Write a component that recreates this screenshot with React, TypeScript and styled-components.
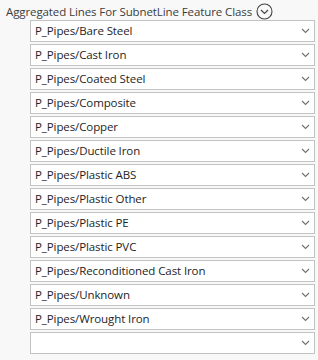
import styled, { createGlobalStyle } from "styled-components";

const Global = createGlobalStyle`
    html, body {
        margin: 0;
        padding: 0;
        background: #f8f8f8;
    }
`;

const Panel = styled.div`
    width: 318px;
    height: 360px;
    background: #f8f8f8;
    font-family: "Open Sans", "Noto Sans", sans-serif;
    font-size: 11.5px;
    color: #2b2b2b;
    box-sizing: border-box;
    padding: 2px 0 0 0;
`;

const Header = styled.div`
    display: flex;
    align-items: center;
    gap: 4px;
    height: 18px;
    padding-left: 6px;
`;

const Title = styled.span`
    color: #3c3c3c;
    white-space: nowrap;
    letter-spacing: -0.1px;
`;

const List = styled.div`
    display: flex;
    flex-direction: column;
    gap: 2px;
    padding: 0 3px 0 30px;
`;

const Select = styled.div`
    display: flex;
    align-items: center;
    justify-content: space-between;
    height: 22px;
    box-sizing: border-box;
    border: 1px solid #c3c3c3;
    background: #fff;
    padding: 0 4px 0 4px;
    color: #1e1e1e;
`;

const Label = styled.span`
    white-space: nowrap;
    line-height: 20px;
    letter-spacing: -0.1px;
`;

function Chevron() {
    return (
        <svg width="9" height="6" viewBox="0 0 9 6">
            <path d="M1 1 L4.5 4.5 L8 1" fill="none" stroke="#707070" strokeWidth="1.1" />
        </svg>
    );
}

function CircleChevron() {
    return (
        <svg width="17" height="17" viewBox="0 0 17 17">
            <circle cx="8.5" cy="8.5" r="7.5" fill="none" stroke="#444" strokeWidth="1.1" />
            <path d="M5 7 L8.5 10.5 L12 7" fill="none" stroke="#444" strokeWidth="1.2" />
        </svg>
    );
}

const items = [
    "P_Pipes/Bare Steel",
    "P_Pipes/Cast Iron",
    "P_Pipes/Coated Steel",
    "P_Pipes/Composite",
    "P_Pipes/Copper",
    "P_Pipes/Ductile Iron",
    "P_Pipes/Plastic ABS",
    "P_Pipes/Plastic Other",
    "P_Pipes/Plastic PE",
    "P_Pipes/Plastic PVC",
    "P_Pipes/Reconditioned Cast Iron",
    "P_Pipes/Unknown",
    "P_Pipes/Wrought Iron",
    "",
];

export default function App() {
    return (
        <Panel>
            <Global />
            <Header>
                <Title>Aggregated Lines For SubnetLine Feature Class</Title>
                <CircleChevron />
            </Header>
            <List>
                {items.map((item, i) => (
                    <Select key={i}>
                        <Label>{item}</Label>
                        <Chevron />
                    </Select>
                ))}
            </List>
        </Panel>
    );
}
